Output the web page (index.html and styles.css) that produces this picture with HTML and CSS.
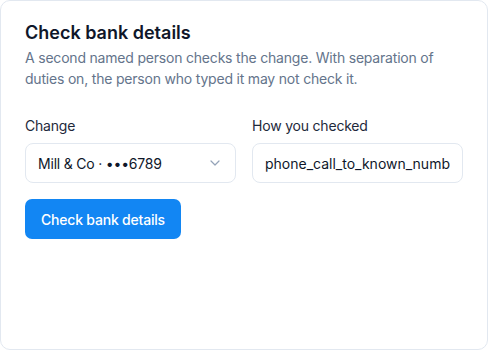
FILE: index.html
```html
<!DOCTYPE html>
<html lang="en">
<head>
<meta charset="utf-8">
<link rel="stylesheet" href="styles.css">
</head>
<body>
<section class="card">
  <h2 class="title">Check bank details</h2>
  <p class="desc">A second named person checks the change. With separation of duties on, the person who typed it may not check it.</p>
  <div class="fields">
    <label class="field">
      <span class="label">Change</span>
      <span class="select">
        <span class="select-text">Mill &amp; Co · •••6789</span>
        <svg class="chev" width="10" height="6" viewBox="0 0 10 6" fill="none" stroke="currentColor" stroke-width="1.2" stroke-linecap="round" stroke-linejoin="round"><path d="M1 1l4 4 4-4"/></svg>
      </span>
    </label>
    <label class="field">
      <span class="label">How you checked</span>
      <input class="input" type="text" value="phone_call_to_known_number">
    </label>
  </div>
  <button class="btn" type="button">Check bank details</button>
</section>
</body>
</html>
```
FILE: styles.css
```css
* { box-sizing: border-box; }
html, body { margin: 0; background: #fff; }
body {
  font-family: Inter, "Noto Sans", sans-serif;
  letter-spacing: -0.2px;
  width: 488px;
  height: 350px;
}
.card {
  width: 488px;
  height: 350px;
  border: 1px solid #e2e8f0;
  border-radius: 10px;
  padding: 20px 24px;
  background: #fff;
}
.title {
  margin: 0;
  font-size: 18px;
  line-height: 24px;
  font-weight: 600;
  color: #0f172a;
  letter-spacing: 0;
}
.desc {
  margin: 2px 0 0;
  font-size: 14px;
  line-height: 21px;
  color: #64748b;
}
.fields {
  margin-top: 27px;
  display: grid;
  grid-template-columns: 1fr 1fr;
  gap: 16px;
}
.field { display: flex; flex-direction: column; gap: 7px; }
.label { font-size: 14px; line-height: 20px; color: #1e293b; }
.select, .input {
  height: 40px;
  border: 1px solid #e2e8f0;
  border-radius: 8px;
  background: #fff;
  font-family: inherit;
  font-size: 14px;
  color: #0f172a;
}
.select {
  display: flex;
  align-items: center;
  justify-content: space-between;
  padding: 0 15px 0 12px;
  letter-spacing: -0.2px;
}
.chev { color: #94a3b8; flex: none; }
.input { padding: 0 12px; width: 100%; outline: none; letter-spacing: 0; }
.btn {
  margin-top: 16px;
  height: 40px;
  padding: 0 16px;
  border: 0;
  border-radius: 7px;
  background: #1286f3;
  color: #fff;
  font-family: inherit;
  font-size: 14px;
  font-weight: 500;
  letter-spacing: -0.2px;
}
```
